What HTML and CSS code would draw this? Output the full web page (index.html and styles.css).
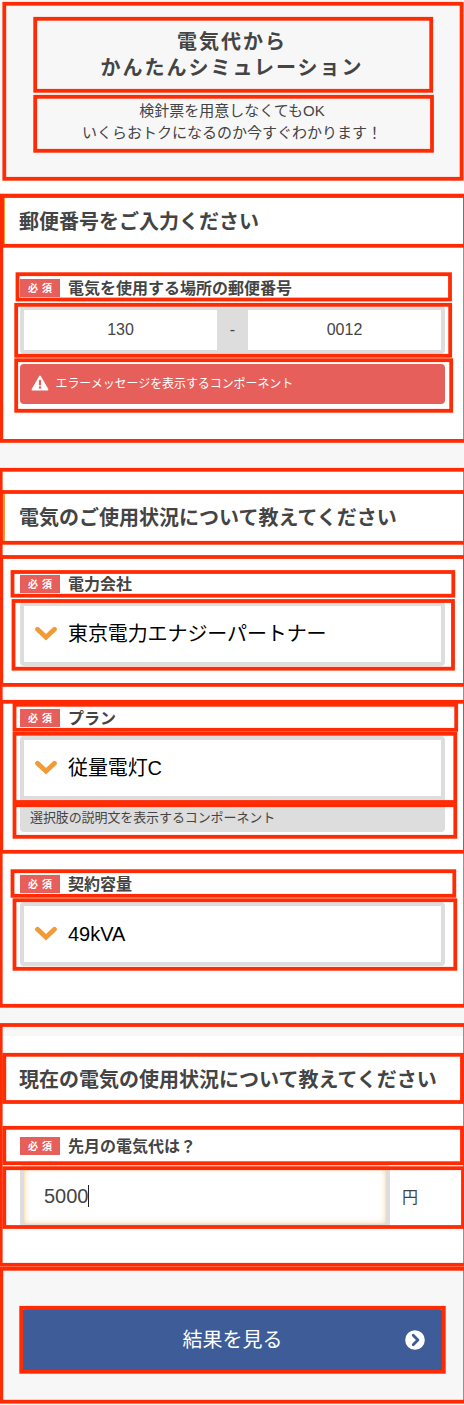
FILE: index.html
```html
<!DOCTYPE html>
<html lang="ja">
<head>
<meta charset="utf-8">
<title>電気代からかんたんシミュレーション</title>
<link rel="stylesheet" href="styles.css">
</head>
<body>
<svg class="symbols" width="0" height="0">
  <symbol id="chevron" viewBox="0 0 24 16"><path d="M3.500 3.300 12 11.300 20.500 3.300" fill="none" stroke="#f19b38" stroke-width="4.800" stroke-linecap="round"/></symbol>
</svg>
<header class="hero">
  <h1 class="hero-title">電気代から<br>かんたんシミュレーション</h1>
  <p class="hero-lead">検針票を用意しなくてもOK<br>いくらおトクになるのか今すぐわかります！</p>
</header>
<main>
  <section class="section section-zip">
    <h2 class="heading">郵便番号をご入力ください</h2>
    <div class="field">
      <div class="label"><span class="badge">必須</span><span class="label-text">電気を使用する場所の郵便番号</span></div>
      <div class="zip">
        <input class="zip-input" value="130"><span class="zip-dash">-</span><input class="zip-input" value="0012">
      </div>
      <div class="error">
        <svg class="error-icon" viewBox="0 0 18 16"><path d="M9 1.500 16.500 14.500H1.500Z" fill="#fff" stroke="#fff" stroke-width="1.800" stroke-linejoin="round"/><path d="M9 5.800V9.500" stroke="#e65f5a" stroke-width="2.200" stroke-linecap="round"/><circle cx="9" cy="12.400" r="1.250" fill="#e65f5a"/></svg>
        <span>エラーメッセージを表示するコンポーネント</span>
      </div>
    </div>
  </section>
  <section class="section section-usage">
    <h2 class="heading">電気のご使用状況について教えてください</h2>
    <div class="field">
      <div class="label"><span class="badge">必須</span><span class="label-text">電力会社</span></div>
      <div class="select"><svg class="chevron"><use href="#chevron"/></svg><span class="value">東京電力エナジーパートナー</span></div>
    </div>
    <div class="field">
      <div class="label"><span class="badge">必須</span><span class="label-text">プラン</span></div>
      <div class="select select-joined"><svg class="chevron"><use href="#chevron"/></svg><span class="value">従量電灯C</span></div>
      <p class="note">選択肢の説明文を表示するコンポーネント</p>
    </div>
    <div class="field">
      <div class="label"><span class="badge">必須</span><span class="label-text">契約容量</span></div>
      <div class="select"><svg class="chevron"><use href="#chevron"/></svg><span>49kVA</span></div>
    </div>
  </section>
  <section class="section section-bill">
    <h2 class="heading">現在の電気の使用状況について教えてください</h2>
    <div class="field">
      <div class="label"><span class="badge">必須</span><span class="label-text">先月の電気代は？</span></div>
      <div class="amount">
        <div class="amount-box"><div class="amount-value">5000<span class="caret"></span></div></div>
        <span class="unit">円</span>
      </div>
    </div>
  </section>
</main>
<footer class="submit">
  <button class="button"><span class="button-text">結果を見る</span><svg class="button-icon" viewBox="0 0 20 20"><circle cx="10" cy="10" r="9.800" fill="#fff"/><path d="M8.200 5.300 12.900 10 8.200 14.700" fill="none" stroke="#3d5c98" stroke-width="2.800" stroke-linecap="round" stroke-linejoin="round"/></svg></button>
</footer>
<!-- component outlines -->
<svg class="outlines" viewBox="0 0 464 1405">
  <rect x="4.300" y="3.800" width="457.300" height="175"/>
  <rect x="35.200" y="18.800" width="396" height="72"/>
  <rect x="35.200" y="96.800" width="396.800" height="54"/>
  <rect x="1.300" y="195.600" width="463.900" height="245.300"/>
  <rect x="2" y="195.900" width="463.200" height="49.900"/>
  <rect x="17.500" y="274.200" width="432.500" height="25.300"/>
  <rect x="16.200" y="304.800" width="434" height="51"/>
  <rect x="16.200" y="360.200" width="435" height="50.600"/>
  <rect x="0.700" y="469.800" width="464.500" height="536"/>
  <rect x="0.700" y="492" width="464.500" height="50.800"/>
  <rect x="1.300" y="557" width="463.900" height="127.900"/>
  <rect x="12.500" y="572" width="440.800" height="23.700"/>
  <rect x="13.500" y="601" width="439.500" height="67.700"/>
  <rect x="1.300" y="701.800" width="463.900" height="150"/>
  <rect x="14.500" y="704.800" width="441.700" height="25"/>
  <rect x="14.500" y="733.800" width="440.800" height="68.200"/>
  <rect x="14.500" y="805.200" width="440.800" height="31.600"/>
  <rect x="12.500" y="871.200" width="441.800" height="24.600"/>
  <rect x="14.500" y="900.200" width="440.800" height="68.600"/>
  <rect x="0.700" y="1025" width="464.500" height="239.800"/>
  <rect x="4.300" y="1054.800" width="457.700" height="47.200"/>
  <rect x="4.300" y="1127.800" width="457.700" height="35.400"/>
  <rect x="4.300" y="1168.200" width="458.700" height="58.800"/>
  <rect x="1.300" y="1268.800" width="463.900" height="132.900"/>
  <rect x="21.200" y="1307.800" width="422.600" height="64"/>
</svg>
</body>
</html>
```

FILE: styles.css
```css
* { box-sizing: border-box; }
html { overflow-x: hidden; }
body {
  position: relative;
  margin: 0;
  width: 464px;
  height: 1405px;
  overflow: hidden;
  background: #f7f7f7;
  color: #444;
  font-family: "Liberation Sans", "Noto Sans CJK JP", sans-serif;
}
h1, h2, p { margin: 0; }
.symbols { display: block; height: 0; }
.hero { height: 181px; padding-top: 29px; text-align: center; }
.hero-title { font-size: 20px; line-height: 26px; letter-spacing: 2px; }
.hero-lead { margin-top: 19px; font-size: 15px; line-height: 22px; }
.section { background: #fff; }
.section-zip { padding: 16px 0 37px; }
.section-usage { margin-top: 28px; padding: 24px 0 40px; }
.section-bill { margin-top: 30px; padding: 19px 0 39px; }
.heading {
  height: 48px;
  padding-left: 14px;
  border-left: 5px solid #f19b38;
  font-size: 20px;
  line-height: 50px;
  white-space: nowrap;
}
.field { margin: 34px 19px 0 20px; }
.field + .field { margin-top: 43px; }
.label {
  display: flex;
  align-items: center;
  gap: 8px;
  height: 18px;
  margin-bottom: 9px;
  font-size: 16px;
  line-height: 18px;
  font-weight: bold;
}
.label-text { padding-top: 2px; }
.badge {
  width: 40px;
  height: 18px;
  padding-left: 8px;
  background: #e65f5a;
  color: #fff;
  font-size: 10px;
  line-height: 20px;
  letter-spacing: 4px;
  white-space: nowrap;
}
.zip {
  display: grid;
  grid-template-columns: 193px 1fr 193px;
  align-items: center;
  height: 48px;
  padding: 4px;
  border-radius: 4px;
  background: #ddd;
}
.zip-input {
  width: 100%;
  height: 40px;
  padding: 0;
  border: 0;
  border-radius: 0;
  background: #fff;
  color: #444;
  font: 16px "Liberation Sans", sans-serif;
  text-align: center;
}
.zip-dash { text-align: center; }
.error {
  display: flex;
  align-items: center;
  gap: 7px;
  height: 40px;
  margin-top: 10px;
  padding: 0 0 3px 10.5px;
  border-radius: 4px;
  background: #e65f5a;
  color: #fff;
  font-size: 12px;
  letter-spacing: -0.08px;
}
.error-icon { width: 18px; height: 16px; }
.select {
  display: flex;
  align-items: center;
  gap: 10px;
  height: 64px;
  padding-left: 10px;
  border: 4px solid #ddd;
  border-radius: 4px;
  color: #000;
  font-size: 20px;
}
.value { padding-bottom: 4px; letter-spacing: -0.1px; }
.select-joined { border-radius: 4px 4px 0 0; }
.chevron { width: 24px; height: 16px; margin-bottom: 1px; }
.note {
  height: 32px;
  padding-left: 10px;
  border-radius: 0 0 4px 4px;
  background: #ddd;
  font-size: 13px;
  line-height: 36px;
  letter-spacing: -0.1px;
}
.amount { display: flex; align-items: center; gap: 12px; }
.amount-box {
  width: 370px;
  height: 64px;
  padding: 4px;
  border-radius: 4px;
  background: #ddd;
}
.amount-value {
  display: flex;
  align-items: center;
  height: 56px;
  padding-left: 20px;
  background: #fff;
  box-shadow: inset 0 0 1px #f5b04d, inset 0 0 6px #f9cf95;
  font-size: 20px;
}
.caret { width: 1px; height: 22px; margin-left: -1px; background: #222; }
.unit { font-size: 16px; }
.submit { padding: 42px 21px 0 22px; }
.button {
  display: grid;
  grid-template-columns: 1fr auto 1fr;
  align-items: center;
  width: 421px;
  height: 62px;
  padding: 0 18px;
  border: 0;
  border-radius: 4px;
  background: #3d5c98;
  color: #fff;
  font: 20px "Liberation Sans", "Noto Sans CJK JP", sans-serif;
}
.button::before { content: ""; }
.button-text { padding-bottom: 4px; }
.button-icon { justify-self: end; width: 20px; height: 20px; }
.outlines {
  position: absolute;
  inset: 0;
  width: 464px;
  height: 1405px;
  fill: none;
  stroke: #ff2b05;
  stroke-width: 3.8;
  pointer-events: none;
}
```
